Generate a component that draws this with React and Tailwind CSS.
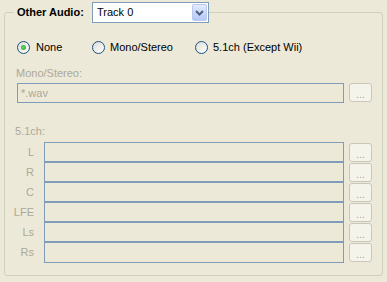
import React from "react";

function Radio({ checked }) {
  return (
    <span className="flex h-[13px] w-[13px] shrink-0 items-center justify-center rounded-full border border-[#1C5180] bg-linear-to-br from-[#DCDCD7] to-white">
      {checked && (
        <span className="h-[5px] w-[5px] rounded-full bg-radial from-[#6BD86B] to-[#1E9C1E]" />
      )}
    </span>
  );
}

function DotsButton({ top = false }) {
  return (
    <div
      className={
        "ml-[5px] flex h-[19px] w-[23px] shrink-0 items-center justify-center rounded-[3px] border border-[#C9C7BA] bg-[#F5F4EA] pt-[4px] text-[11px] leading-[13px] text-[#ACA899] " +
        (top ? "" : "mt-[1px]")
      }
    >
      ...
    </div>
  );
}

const channels = ["L", "R", "C", "LFE", "Ls", "Rs"];

export default function App() {
  return (
    <div className="h-[282px] w-[387px] overflow-hidden bg-[#ECE9D8] pt-[2px] font-['Liberation_Sans',Arial,sans-serif] text-[11px] leading-[13px] text-black">
      <fieldset className="ml-[4px] h-[274px] w-[379px] rounded-[3px] border border-[#D0D0BF]">
        <legend className="ml-[9px] flex h-[21px] items-center pl-[3px]">
          <span className="w-[75px] font-bold">Other Audio:</span>
          <div className="flex h-[21px] w-[117px] items-center justify-between border border-[#7F9DB9] bg-white p-[1px]">
            <span className="pl-[3px]">Track 0</span>
            <span className="flex h-[17px] w-[15px] items-center justify-center rounded-[2px] border border-[#BAC9EF] bg-linear-to-b from-[#E3EBFD] to-[#B4C8F4]">
              <svg width="9" height="6" viewBox="0 0 9 6">
                <path d="M1 1 L4.5 4.5 L8 1" fill="none" stroke="#4D6185" strokeWidth="2" />
              </svg>
            </span>
          </div>
        </legend>

        <div className="flex flex-col pl-[12px]">
          <div className="mt-[18px] flex h-[13px] items-center">
            <label className="flex w-[75px] items-center gap-[6px]">
              <Radio checked />
              <span>None</span>
            </label>
            <label className="flex w-[103px] items-center gap-[5px]">
              <Radio />
              <span>Mono/Stereo</span>
            </label>
            <label className="flex items-center gap-[5px]">
              <Radio />
              <span>5.1ch (Except Wii)</span>
            </label>
          </div>

          <div className="-ml-[1px] mt-[13px] text-[#ACA899]">Mono/Stereo:</div>
          <div className="mt-[3px] flex items-start">
            <div className="flex h-[20px] w-[327px] items-center border border-[#7F9DB9] pl-[3px] text-[#ACA899]">
              *.wav
            </div>
            <DotsButton top />
          </div>

          <div className="-ml-[2px] mt-[22px] text-[#ACA899]">5.1ch:</div>
          <div className="-ml-[12px] mt-[4px] flex flex-col">
            {channels.map((c, i) => (
              <div key={c} className="flex h-[20px] items-start">
                <div className="flex h-[20px] w-[29px] items-center justify-end text-[#ACA899]">
                  {c}
                </div>
                <div
                  className={
                    "ml-[10px] w-[300px] border border-[#7F9DB9] " +
                    (i === 0 ? "h-[21px]" : "-mt-[1px] h-[22px]")
                  }
                />
                <DotsButton />
              </div>
            ))}
          </div>
        </div>
      </fieldset>
    </div>
  );
}
